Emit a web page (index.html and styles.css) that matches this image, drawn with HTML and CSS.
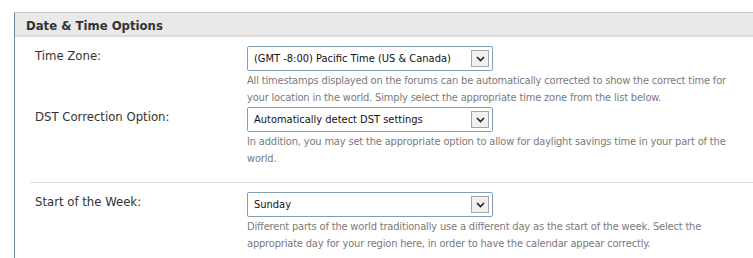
FILE: index.html
```html
<!DOCTYPE html>
<html lang="en">
<head>
    <meta charset="UTF-8">
    <title>Date &amp; Time Options</title>
    <link rel="stylesheet" href="styles.css">
</head>
<body>
<div class="panel">
    <div class="panel-head">Date &amp; Time Options</div>

    <div class="group">
        <div class="row">
            <div class="label">Time Zone:</div>
            <div class="field">
                <div class="select">
                    <span class="value">(GMT -8:00) Pacific Time (US &amp; Canada)</span>
                    <span class="arrow"><svg width="9" height="6" viewBox="0 0 9 6"><path d="M1 1 L4.5 4.5 L8 1" fill="none" stroke="#222" stroke-width="1.6"/></svg></span>
                </div>
                <div class="desc">All timestamps displayed on the forums can be automatically corrected to show the correct time for your location in the world. Simply select the appropriate time zone from the list below.</div>
            </div>
        </div>
        <div class="row">
            <div class="label">DST Correction Option:</div>
            <div class="field">
                <div class="select">
                    <span class="value">Automatically detect DST settings</span>
                    <span class="arrow"><svg width="9" height="6" viewBox="0 0 9 6"><path d="M1 1 L4.5 4.5 L8 1" fill="none" stroke="#222" stroke-width="1.6"/></svg></span>
                </div>
                <div class="desc">In addition, you may set the appropriate option to allow for daylight savings time in your part of the world.</div>
            </div>
        </div>
    </div>

    <div class="group divided">
        <div class="row">
            <div class="label">Start of the Week:</div>
            <div class="field">
                <div class="select">
                    <span class="value">Sunday</span>
                    <span class="arrow"><svg width="9" height="6" viewBox="0 0 9 6"><path d="M1 1 L4.5 4.5 L8 1" fill="none" stroke="#222" stroke-width="1.6"/></svg></span>
                </div>
                <div class="desc">Different parts of the world traditionally use a different day as the start of the week. Select the appropriate day for your region here, in order to have the calendar appear correctly.</div>
            </div>
        </div>
    </div>
</div>
</body>
</html>
```

FILE: styles.css
```css
body {
    margin: 0;
    background: #fff;
    font-family: "DejaVu Sans Condensed", "DejaVu Sans", sans-serif;
    color: #333;
}

.panel {
    margin: 12px 0 0 14px;
    border-left: 1px solid #6f8799;
    border-top: 1px solid #c8c8c8;
    min-height: 246px;
}

.panel-head {
    background: #e9e9e9;
    border-bottom: 2px solid #dcdcdc;
    padding: 5px 11px 0;
    height: 17px;
    font-size: 13px;
    font-weight: bold;
    color: #333;
}

.group {
    margin-left: 15px;
    padding-top: 9px;
}

.group.divided {
    border-top: 1px solid #d6dce2;
    margin-top: 15px;
}

.row {
    display: flex;
    padding-left: 5px;
    margin-bottom: 1px;
}

.label {
    width: 212px;
    font-size: 13px;
    padding-top: 2px;
}

.field {
    width: 500px;
}

.select {
    display: flex;
    align-items: center;
    justify-content: space-between;
    width: 244px;
    height: 23px;
    border: 1px solid #7f9db9;
    border-radius: 2px;
    background: #fff;
}

.value {
    font-size: 11px;
    color: #111;
    padding-left: 6px;
}

.arrow {
    display: flex;
    align-items: center;
    justify-content: center;
    width: 16px;
    height: 15px;
    margin-right: 3px;
    border: 1px solid #a6a6a6;
    background: #f1f1f1;
}

.desc {
    font-size: 11px;
    line-height: 17px;
    letter-spacing: -0.17px;
    color: #7a7a7a;
    margin-top: 1px;
}
```
